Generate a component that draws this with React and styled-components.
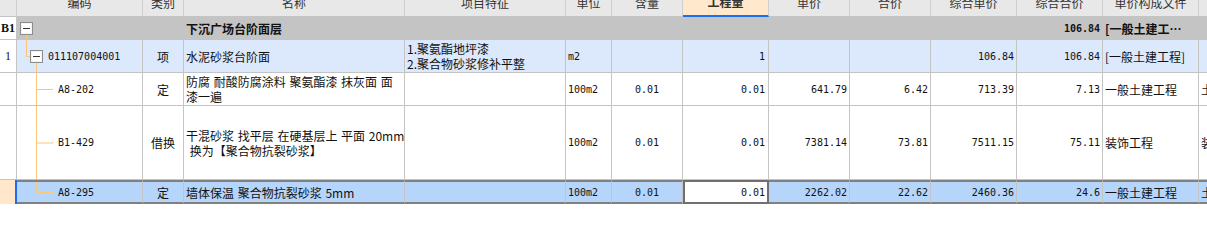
import React from "react";
import styled, { createGlobalStyle } from "styled-components";

const GlobalStyle = createGlobalStyle`
  body {
    margin: 0;
    background: #ffffff;
  }
`;

const COLS = "17px 126px 41px 221px 161px 46px 71px 86px 81px 81px 86px 86px 96px 100px";
const CJK = '"Noto Sans CJK SC", sans-serif';
const MONO = '"DejaVu Sans Mono", "Noto Sans CJK SC", monospace';

const Sheet = styled.div`
  width: 1207px;
  overflow: hidden;
  color: #111;
`;

const Row = styled.div`
  display: grid;
  grid-template-columns: ${COLS};
  height: ${(p) => p.$h}px;
  background: ${(p) => p.$bg || "#fff"};
`;

const Cell = styled.div`
  box-sizing: border-box;
  position: relative;
  display: flex;
  align-items: center;
  justify-content: ${(p) =>
    p.$align === "right" ? "flex-end" : p.$align === "center" ? "center" : "flex-start"};
  padding: 0 ${(p) => (p.$pad !== undefined ? p.$pad : 2)}px;
  border-right: 1px solid #c4c4c4;
  border-bottom: 1px solid #c4c4c4;
  font-family: ${(p) => (p.$mono ? MONO : CJK)};
  font-size: ${(p) => (p.$mono ? 10 : 12)}px;
  font-weight: ${(p) => (p.$bold ? 700 : 400)};
  line-height: 15px;
  word-spacing: ${(p) => (p.$mono ? 0 : 1)}px;
  white-space: pre;
  overflow: hidden;
  background: ${(p) => p.$bg || "transparent"};

  ${(p) =>
    p.$selected &&
    `
    border-top: 2px solid #808080;
    border-bottom: 2px solid #808080;
  `}
  ${(p) =>
    p.$editing &&
    `
    background: #fff;
    border: 2px solid #707070;
    padding-right: 2px;
  `}
`;

const HeaderRow = styled(Row)`
  background: #e8e8e8;
`;

const HeaderCell = styled(Cell)`
  justify-content: center;
  color: #333;
  border-right-color: #cfcfcf;
  border-bottom-color: #c4c4c4;
  background: ${(p) => (p.$active ? "#ffe8cb" : "transparent")};
  ${(p) => p.$active && "border-bottom: 2px solid #1a6ef5;"}

  span {
    transform: translateY(-6px);
  }
`;

const RowHead = styled(Cell)`
  justify-content: center;
  padding: 0;
  font-family: "Liberation Serif", serif;
  font-size: 12px;
  background: ${(p) => (p.$current ? "#ffe7c9" : "#fff")};
  ${(p) => p.$current && "border-right: 2px solid #1a6ef5; border-bottom: none;"}
`;

const ExpandBox = styled.span`
  position: relative;
  box-sizing: border-box;
  flex: none;
  width: 13px;
  height: 13px;
  margin-left: ${(p) => p.$indent}px;
  margin-right: 5px;
  border: 1px solid #8c8c8c;
  background: #fff;
  box-shadow: inset 0 0 0 1px #f4f4f4;

  &::after {
    content: "";
    position: absolute;
    left: 2px;
    right: 2px;
    top: 5px;
    height: 1px;
    background: #333;
  }
`;

const Guide = styled.svg`
  position: absolute;
  left: 0;
  top: 0;
  width: 60px;
  height: calc(100% + 1px);
  overflow: visible;
`;

const CodeText = styled.span`
  position: relative;
  font-family: ${MONO};
  font-size: 10px;
  padding-left: ${(p) => p.$indent || 0}px;
`;

const TREE = "#f8c77c";

function TreeGuide({ kind }) {
  return (
    <Guide>
      {kind === "group" && <line x1="9.5" y1="50%" x2="9.5" y2="100%" stroke={TREE} />}
      {kind === "parent" && (
        <>
          <line x1="9.5" y1="0" x2="9.5" y2="50%" stroke={TREE} />
          <line x1="9.5" y1="50%" x2="14" y2="50%" stroke={TREE} />
          <line x1="19.5" y1="50%" x2="19.5" y2="100%" stroke={TREE} />
        </>
      )}
      {(kind === "child" || kind === "last") && (
        <>
          <line x1="19.5" y1="0" x2="19.5" y2={kind === "last" ? "50%" : "100%"} stroke={TREE} />
          <line x1="19.5" y1="50%" x2="36" y2="50%" stroke={TREE} />
        </>
      )}
    </Guide>
  );
}

const headers = [
  "", "编码", "类别", "名称", "项目特征", "单位", "含量", "工程量",
  "单价", "合价", "综合单价", "综合合价", "单价构成文件", "取费专业",
];

const items = [
  {
    rh: "1", code: "011107004001", kind: "parent", type: "项", name: "水泥砂浆台阶面",
    feature: "1.聚氨酯地坪漆\n2.聚合物砂浆修补平整", unit: "m2", content: "", qty: "1",
    price: "", total: "", cprice: "106.84", ctotal: "106.84", file: "[一般土建工程]", extra: "",
    h: 33, bg: "#dce8fc",
  },
  {
    rh: "", code: "A8-202", kind: "child", type: "定", name: "防腐 耐酸防腐涂料 聚氨酯漆 抹灰面 面\n漆一遍",
    feature: "", unit: "100m2", content: "0.01", qty: "0.01", price: "641.79", total: "6.42",
    cprice: "713.39", ctotal: "7.13", file: "一般土建工程", extra: "土建工程", h: 33,
  },
  {
    rh: "", code: "B1-429", kind: "child", type: "借换", name: "干混砂浆 找平层 在硬基层上 平面 20mm\n 换为【聚合物抗裂砂浆】",
    feature: "", unit: "100m2", content: "0.01", qty: "0.01", price: "7381.14", total: "73.81",
    cprice: "7511.15", ctotal: "75.11", file: "装饰工程", extra: "装饰工程", h: 74,
  },
  {
    rh: "", code: "A8-295", kind: "last", type: "定", name: "墙体保温 聚合物抗裂砂浆 5mm",
    feature: "", unit: "100m2", content: "0.01", qty: "0.01", price: "2262.02", total: "22.62",
    cprice: "2460.36", ctotal: "24.6", file: "一般土建工程", extra: "土建工程", h: 24,
    bg: "#b5d5fb", selected: true,
  },
];

export default function App() {
  return (
    <Sheet>
      <GlobalStyle />
      <HeaderRow $h={17}>
        {headers.map((h) => (
          <HeaderCell key={h || "corner"} $active={h === "工程量"} $bold={h === "工程量"}>
            <span>{h}</span>
          </HeaderCell>
        ))}
      </HeaderRow>

      <Row $h={23} $bg="#c4c4c4">
        <RowHead $bold>B1</RowHead>
        <Cell $pad={0}>
          <TreeGuide kind="group" />
          <ExpandBox $indent={3} />
        </Cell>
        <Cell />
        <Cell $bold>下沉广场台阶面层</Cell>
        <Cell />
        <Cell />
        <Cell />
        <Cell />
        <Cell />
        <Cell />
        <Cell />
        <Cell $mono $bold $align="right">106.84</Cell>
        <Cell $bold>[一般土建工…</Cell>
        <Cell />
      </Row>

      {items.map((it) => {
        const s = it.selected;
        return (
          <Row key={it.code} $h={it.h} $bg={it.bg}>
            <RowHead $current={s}>{it.rh}</RowHead>
            <Cell $pad={0} $selected={s}>
              <TreeGuide kind={it.kind} />
              {it.kind === "parent" && <ExpandBox $indent={13} />}
              <CodeText $indent={it.kind === "parent" ? 0 : 41}>{it.code}</CodeText>
            </Cell>
            <Cell $align="center" $selected={s}>{it.type}</Cell>
            <Cell $selected={s}>{it.name}</Cell>
            <Cell $selected={s}>{it.feature}</Cell>
            <Cell $mono $selected={s}>{it.unit}</Cell>
            <Cell $mono $align="center" $selected={s}>{it.content}</Cell>
            <Cell $mono $align="right" $selected={s} $editing={s} $pad={3}>{it.qty}</Cell>
            <Cell $mono $align="right" $selected={s}>{it.price}</Cell>
            <Cell $mono $align="right" $selected={s}>{it.total}</Cell>
            <Cell $mono $align="right" $selected={s}>{it.cprice}</Cell>
            <Cell $mono $align="right" $selected={s}>{it.ctotal}</Cell>
            <Cell $selected={s}>{it.file}</Cell>
            <Cell $selected={s}>{it.extra}</Cell>
          </Row>
        );
      })}
    </Sheet>
  );
}
